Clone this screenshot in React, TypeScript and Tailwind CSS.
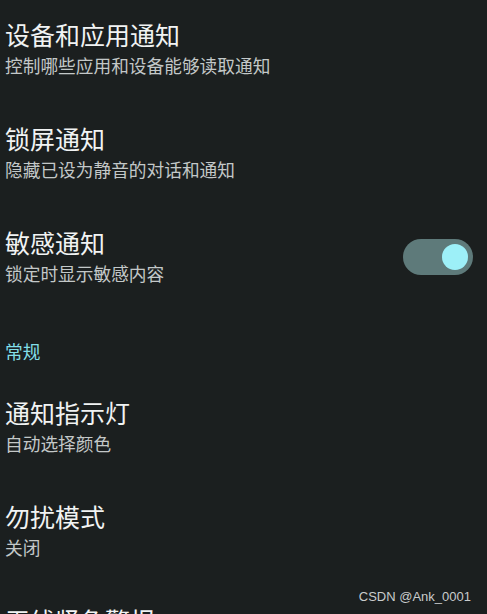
import React from 'react';

type Row = { title: string; summary?: string; toggle?: boolean };

const topRows: Row[] = [
  { title: '设备和应用通知', summary: '控制哪些应用和设备能够读取通知' },
  { title: '锁屏通知', summary: '隐藏已设为静音的对话和通知' },
  { title: '敏感通知', summary: '锁定时显示敏感内容', toggle: true },
];

const generalRows: Row[] = [
  { title: '通知指示灯', summary: '自动选择颜色' },
  { title: '勿扰模式', summary: '关闭' },
  { title: '无线紧急警报', summary: '' },
];

const Toggle = () => (
  <div className="w-[70px] h-[36px] rounded-full bg-[#5e7a7a] flex items-center justify-end pr-[5px]">
    <div className="w-[26px] h-[26px] rounded-full bg-[#9df0f8]"></div>
  </div>
);

const PrefRow = ({ row }: { row: Row }) => (
  <div className="flex items-center pl-[5px] pr-[14px] pt-[18px] pb-[24px]">
    <div className="flex-1 flex flex-col">
      <span className="text-[25px] leading-[32px] text-[#f1f3f3]">{row.title}</span>
      <span className="text-[17.7px] leading-[30px] text-[#c3c8c8]">{row.summary}</span>
    </div>
    {row.toggle && <Toggle />}
  </div>
);

export default function App() {
  return (
    <div
      className="relative w-[487px] h-[614px] overflow-hidden bg-[#1b1f1f]"
      style={{ fontFamily: '"Noto Sans CJK SC", "Noto Sans", sans-serif' }}
    >
      {topRows.map((r) => (
        <PrefRow key={r.title} row={r} />
      ))}
      <div className="pl-[5px] pt-[27px] pb-[15px] text-[17.7px] leading-[24px] text-[#82dfe8]">常规</div>
      {generalRows.map((r) => (
        <PrefRow key={r.title} row={r} />
      ))}
      <div
        className="absolute right-[16px] top-[588px] text-[13px] leading-[18px] text-[#c9cccc]"
        style={{ fontFamily: '"Liberation Sans", sans-serif' }}
      >
        CSDN @Ank_0001
      </div>
    </div>
  );
}
